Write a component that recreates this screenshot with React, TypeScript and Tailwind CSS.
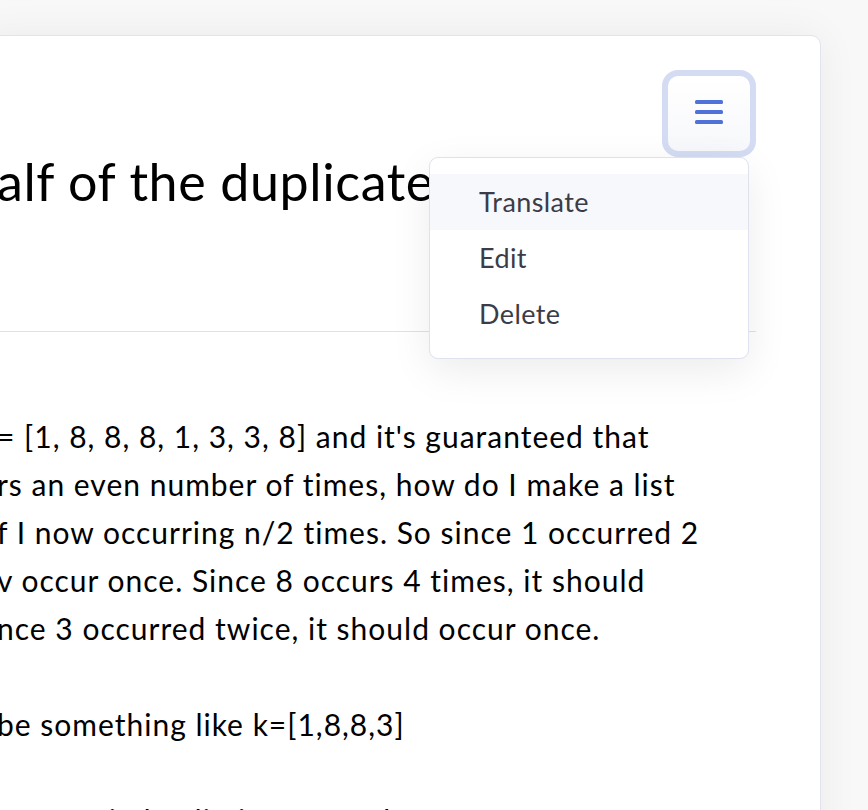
import { useState } from "react";

const lines = [
  "= [1, 8, 8, 8, 1, 3, 3, 8] and it's guaranteed that",
  "rs an even number of times, how do I make a list",
  "f I now occurring n/2 times. So since 1 occurred 2",
  "v occur once. Since 8 occurs 4 times, it should",
  "nce 3 occurred twice, it should occur once.",
];

const menuItems = ["Translate", "Edit", "Delete"];

const MenuIcon = () => (
  <svg width="28" height="24" viewBox="0 0 28 24" fill="none">
    <rect x="0" y="0" width="28" height="4" rx="1.5" fill="#4f72d9" />
    <rect x="0" y="10" width="28" height="4" rx="1.5" fill="#4f72d9" />
    <rect x="0" y="20" width="28" height="4" rx="1.5" fill="#4f72d9" />
  </svg>
);

const App = () => {
  const [hover, setHover] = useState(0);

  return (
    <div
      className="min-h-screen overflow-hidden bg-[#f8f8f9] pt-[35px] pr-[47px] flex"
      style={{ fontFamily: "Lato, 'Open Sans', sans-serif" }}
    >
      <div className="flex-1 -ml-[20px] bg-white border-[1.5px] border-[#e1e3ef] rounded-[10px] shadow-[0_0_40px_rgba(0,0,0,0.06)] pl-[16px] pr-[64px] pt-[34px] pb-10 text-black">
        <div className="flex justify-between items-start">
          <h1 className="pt-[81px] text-[52px] leading-[60px] tracking-[0.6px] whitespace-nowrap">
            alf of the duplicates
          </h1>

          <div className="relative">
            <button className="w-[94px] h-[87px] rounded-[16px] border-[6px] border-[#d4dcf4] bg-gradient-to-b from-white to-[#f7f8fb] grid place-items-center pb-[3px]">
              <MenuIcon />
            </button>

            <div className="absolute top-full right-[7px] w-[320px] bg-white border-[1.5px] border-[#dfe1ef] rounded-[9px] shadow-[0_12px_40px_rgba(0,0,0,0.08)] py-[16px] z-10">
              {menuItems.map((item, key) => (
                <div
                  key={key}
                  onMouseEnter={() => setHover(key)}
                  className={
                    "h-[56px] flex items-center pl-[49px] text-[27px] tracking-[0.4px] text-[#3b3c48] " +
                    (hover === key ? "bg-[#f7f8fc]" : "")
                  }
                >
                  {item}
                </div>
              ))}
            </div>
          </div>
        </div>

        <div className="mt-[120px] -ml-[16px] border-t-[1.5px] border-[#e2e2e4]" />

        <div className="mt-[80px] text-[30px] leading-[48px] tracking-[1px]">
          {lines.map((line, key) => (
            <p key={key} className="whitespace-nowrap">
              {line}
            </p>
          ))}
          <p className="whitespace-nowrap mt-[48px]">be something like k=[1,8,8,3]</p>
          <p className="whitespace-nowrap mt-[48px] pl-[70px]">I tried a dictionary of the counts</p>
        </div>
      </div>
    </div>
  );
};

export default App;
